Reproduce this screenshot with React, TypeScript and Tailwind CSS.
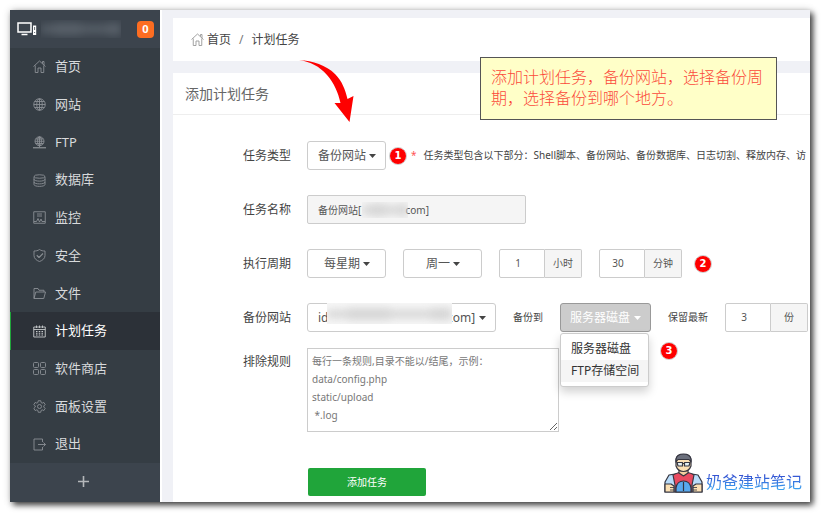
import React, { useState } from "react";

type IconName =
  | "home"
  | "site"
  | "ftp"
  | "database"
  | "monitor"
  | "shield"
  | "folder"
  | "calendar"
  | "apps"
  | "gear"
  | "exit";

const NAV_ITEMS: { icon: IconName; label: string }[] = [
  { icon: "home", label: "首页" },
  { icon: "site", label: "网站" },
  { icon: "ftp", label: "FTP" },
  { icon: "database", label: "数据库" },
  { icon: "monitor", label: "监控" },
  { icon: "shield", label: "安全" },
  { icon: "folder", label: "文件" },
  { icon: "calendar", label: "计划任务" },
  { icon: "apps", label: "软件商店" },
  { icon: "gear", label: "面板设置" },
  { icon: "exit", label: "退出" },
];

const EXCLUDE_HINT =
  "每行一条规则,目录不能以/结尾，示例：\ndata/config.php\nstatic/upload\n *.log";

// The domain is masked, so the gap is padded with non-breaking spaces
const MASKED_NAME = "备份网站[" + "\u00a0".repeat(17) + "com]";
const MASKED_SITE = "id" + "\u00a0".repeat(38) + "com]";

const ICONS: Record<IconName, React.ReactNode> = {
  home: (
    <path d="M1 13 13 2l12 11M4.500 11v14H10v-9h6v9h5.500V11M19 7V3h3v7" />
  ),
  site: (
    <>
      <circle cx="13" cy="13" r="11.500" />
      <ellipse cx="13" cy="13" rx="5.500" ry="11.500" />
      <path d="M13 1.500v23M1.500 13h23M3.500 7h19M3.500 19h19" />
    </>
  ),
  ftp: (
    <>
      <circle cx="13" cy="10.500" r="9" />
      <ellipse cx="13" cy="10.500" rx="4" ry="9" />
      <path d="M13 1.500v21M4 10.500h18M5.500 6h15M5.500 15h15" />
      <path d="M0 23.500h26" strokeWidth="2.500" />
    </>
  ),
  database: (
    <>
      <ellipse cx="13" cy="5" rx="11" ry="3.500" />
      <path d="M2 5v16c0 5 22 5 22 0V5M2 10.500c0 5 22 5 22 0M2 16c0 5 22 5 22 0" />
    </>
  ),
  monitor: (
    <>
      <path d="M1.500 1.500h23v23h-23z" />
      <path d="M8 6h10M8 10h10M2 21h5l3-6 3 7 3-6 2 5h6" />
    </>
  ),
  shield: (
    <>
      <path d="M13 1c3.500 2.500 7 3 11 3v9c0 6-5 10-11 12C7 23 2 19 2 13V4c4 0 7.500-.5 11-3z" />
      <path d="m7.500 12.500 4.500 4.500 8-8" strokeWidth="2.200" />
    </>
  ),
  folder: (
    <path d="M2 23V3h8l2 3.500h10V10M2 23l3.500-13H25l-3.500 13H2z" />
  ),
  calendar: (
    <>
      <path d="M1.500 4h23v20h-23zM1.500 9h23M7 1v5M13 1v5M19 1v5" />
      <path d="M6 13h3M11.500 13h3M17 13h3M6 16.500h3M11.500 16.500h3M17 16.500h3M6 20h3M11.500 20h3M17 20h3" strokeWidth="2.200" />
    </>
  ),
  apps: (
    <>
      <rect x="1" y="1" width="10" height="10" rx="2" />
      <rect x="15" y="1" width="10" height="10" rx="2" />
      <rect x="1" y="15" width="10" height="10" rx="2" />
      <rect x="15" y="15" width="10" height="10" rx="2" />
    </>
  ),
  gear: (
    <>
      <path d="m10.500 1.500-.8 3.700-2 1.100-3.400-1.400-2.600 4.300L4.500 12v2l-2.800 2.800 2.600 4.300 3.400-1.400 2 1.100.8 3.700h5l.8-3.700 2-1.100 3.400 1.400 2.600-4.300-2.800-2.800v-2l2.800-2.800-2.600-4.300-3.400 1.400-2-1.100-.8-3.700z" />
      <circle cx="13" cy="13" r="4" />
    </>
  ),
  exit: <path d="M19 8V2H2v22h17v-6M10 13h15M21 9l4 4-4 4" />,
};

const Icon = ({ name, className }: { name: IconName; className?: string }) => (
  <svg
    viewBox="0 0 26 26"
    fill="none"
    stroke="currentColor"
    strokeWidth="1.800"
    strokeLinejoin="round"
    aria-hidden="true"
    className={`size-[13px] shrink-0 ${className ?? ""}`}
  >
    {ICONS[name]}
  </svg>
);

const Caret = ({ className }: { className?: string }) => (
  <svg
    viewBox="0 0 7 4"
    fill="currentColor"
    aria-hidden="true"
    className={`h-1 w-[7px] shrink-0 ${className ?? ""}`}
  >
    <path d="M0 0h7L3.500 4z" />
  </svg>
);

// Blurred patch that hides the server address and domains
const Smudge = ({ className }: { className: string }) => (
  <span className={`pointer-events-none overflow-hidden ${className}`}>
    <span className="flex h-full items-center blur-[4px]">
      <span className="h-2 flex-1 bg-current" />
      <span className="h-3 flex-2 bg-current" />
      <span className="h-2 flex-2 bg-current" />
      <span className="h-3 flex-1 bg-current" />
    </span>
  </span>
);

const Step = ({ n, className }: { n: number; className: string }) => (
  <span
    className={`flex size-[18px] items-center justify-center rounded-full border border-[#ccc] bg-white ${className}`}
  >
    <span className="flex size-4 items-center justify-center rounded-full bg-[#fe0000] font-['DejaVu_Sans',sans-serif] text-[10px] leading-none font-bold text-white">
      {n}
    </span>
  </span>
);

interface DropProps {
  label: string;
  options: string[];
  className: string;
  selectClass?: string;
  caretClass?: string;
  children?: React.ReactNode;
}

const Drop = ({
  label,
  options,
  className,
  selectClass = "pl-[10px]",
  caretClass = "right-[10px]",
  children,
}: DropProps) => (
  <span className={`relative h-[29px] shrink-0 ${className}`}>
    <select
      aria-label={label}
      className={`h-full w-full appearance-none rounded-[3px] border border-[#ccc] bg-white pr-4 text-xs text-[#555] ${selectClass}`}
    >
      {options.map((o) => (
        <option key={o}>{o}</option>
      ))}
    </select>
    {children}
    <Caret className={`pointer-events-none absolute top-[13px] text-[#444] ${caretClass}`} />
  </span>
);

const UnitInput = ({ label, value, unit }: { label: string; value: string; unit: string }) => (
  <label className="flex h-[29px] shrink-0 text-[10px] text-[#555]">
    <input
      aria-label={label}
      defaultValue={value}
      className="w-[46px] rounded-l-[2px] border border-[#ccc] bg-white pr-2 text-center"
    />
    <span className="flex w-[37px] items-center justify-center rounded-r-[2px] border border-l-0 border-[#ccc] bg-[#f5f5f5]">
      {unit}
    </span>
  </label>
);

const Row = ({ label, children }: { label: string; children: React.ReactNode }) => (
  <div className="flex h-[29px] items-center gap-4">
    <span className="w-[118px] shrink-0 text-right text-xs text-[#444]">{label}</span>
    <div className="flex items-center whitespace-nowrap">{children}</div>
  </div>
);

const Sidebar = () => (
  <aside className="flex w-[150px] shrink-0 flex-col bg-[#353d44]">
    <div className="flex h-[38px] items-center bg-[#3c444d] pr-[6px] pl-[7px]">
      <svg viewBox="0 0 20 14" className="h-[14px] w-5" aria-hidden="true">
        <path d="M1 1h13v9H1z" fill="none" stroke="#fff" strokeWidth="1.500" />
        <path d="M4.500 12.500h6" stroke="#fff" strokeWidth="1.500" />
        <path d="M16 3.500h3.200V13H16z" fill="#fff" />
        <path d="M17.600 5v3M17.600 10v1" stroke="#3c444d" strokeWidth=".8" />
      </svg>
      <Smudge className="ml-1 h-[18px] w-20 text-[#59616a]" />
      <span className="ml-auto flex h-[17px] w-[17px] items-center justify-center rounded-[4px] bg-[#fd6d21] text-[11px] font-bold text-white">
        0
      </span>
    </div>
    <nav className="flex-1">
      <ul className="flex h-full flex-col">
        {NAV_ITEMS.map(({ icon, label }) => (
          <li key={label} className="flex flex-1">
            <a
              href="#"
              className={
                icon === "calendar"
                  ? "flex flex-1 items-center gap-[9px] border-l border-[#20a53a] bg-[#2c3138] pl-[22px] text-[13px] text-white"
                  : "flex flex-1 items-center gap-[9px] pl-[23px] text-[13px] text-[#d8dadc]"
              }
            >
              <Icon
                name={icon}
                className={icon === "calendar" ? "text-[#c6c9cc]" : "text-[#8b9095]"}
              />
              {label}
            </a>
          </li>
        ))}
      </ul>
    </nav>
    <button aria-label="添加菜单" className="flex h-[39px] items-center justify-center bg-[#3c444d] pr-1 pb-[2px]">
      <svg viewBox="0 0 11 11" className="size-[11px]" aria-hidden="true">
        <path d="M5.500 0v11M0 5.500h11" stroke="#b4b7ba" strokeWidth="1.600" />
      </svg>
    </button>
  </aside>
);

const BackupTarget = () => {
  const [open, setOpen] = useState(true);
  const [target, setTarget] = useState("服务器磁盘");

  const pick = (value: string) => {
    setTarget(value);
    setOpen(false);
  };

  return (
    <div className="relative ml-[17px]">
      <button
        aria-haspopup="menu"
        aria-expanded={open}
        onClick={() => setOpen(!open)}
        className="flex h-[29px] w-[91px] items-center justify-center gap-1 rounded-[3px] border border-[#999] bg-[#ccc] text-xs text-white"
      >
        {target}
        <Caret />
      </button>
      {open && (
        <div
          role="menu"
          className="absolute top-[30px] left-0 z-10 w-[89px] rounded-[3px] border border-[#ccc] bg-white py-1 shadow-[0_5px_10px_rgba(0,0,0,0.18)]"
        >
          <button
            role="menuitem"
            onClick={() => pick("服务器磁盘")}
            className="block h-[22px] w-full pl-[10px] text-left text-xs text-[#333]"
          >
            服务器磁盘
          </button>
          <button
            role="menuitem"
            onClick={() => pick("FTP存储空间")}
            className="block h-[22px] w-full bg-[#f5f5f5] pl-[10px] text-left text-xs text-[#333]"
          >
            FTP存储空间
          </button>
        </div>
      )}
      <Step n={3} className="absolute top-[39px] left-[100px]" />
    </div>
  );
};

const Watermark = () => (
  <div className="absolute right-2 bottom-[9px] flex items-end gap-[3px]">
    <svg viewBox="0 0 39 40" className="h-10 w-[39px]" aria-hidden="true">
      <g stroke="#353540" strokeWidth="1.200" strokeLinejoin="round">
        <path d="M1 29 5 22l9-1.500h11l9 1.500 4 7v10H1z" fill="#b9dcfa" />
        <path d="M9 22q4-2 6-2.500l4.500 2.500 4.500-2.500q3 .5 6 2.500l-2 10v7H11v-7z" fill="#e84a60" />
        <path d="M15 15h9v5l-4.500 3L15 20z" fill="#f3cf9f" />
        <path d="M12 7q0-5.500 7.500-5.500T27 7v6q-2 5.500-7.500 5.500T12 13z" fill="#fbe0b4" />
        <path d="M12 9V6q1-5 7.500-5T27 6v3l-2-2.500H14z" fill="#6b6f7c" />
        <path d="M13 9.500h5.500V13H14zM20.500 9.500H26L25 13h-4.500zM18 10.500h3" fill="#e4f1f5" />
        <path d="M12 39v-4q1-7 7.500-7t7.500 7v4z" fill="#58a9ee" />
        <path d="M19.500 29v9" fill="none" />
        <path d="M1 31h6l3 2v6H1zM38 31h-6l-3 2v6h9z" fill="#fbe0b4" />
        <path d="M6 34.500h4M6 37h4M29 34.500h4M29 37h4" fill="none" strokeWidth=".8" />
      </g>
    </svg>
    <span className="bg-linear-to-b from-[#3535c8] to-[#3db4f6] bg-clip-text text-base leading-[22px] text-transparent">
      奶爸建站笔记
    </span>
  </div>
);

const App = () => {
  return (
    <div className="flex min-h-screen bg-white pt-[10px] pr-[11px] pb-[11px] pl-[10px] font-['Noto_Sans','Noto_Sans_CJK_SC',sans-serif]">
      <div className="relative flex min-w-0 flex-1 shadow-[3px_3px_6px_rgba(0,0,0,0.75),0_0_8px_rgba(0,0,0,0.15)]">
        <Sidebar />

        <main className="flex min-w-0 flex-1 flex-col gap-3 overflow-hidden border-l-2 border-white bg-[#f0f1f6] pt-2 pl-[11px]">
          {/* Breadcrumb */}
          <div className="flex h-[43px] shrink-0 items-center bg-white pl-[18px] text-xs text-[#444]">
            <Icon name="home" className="mr-[3px] text-[#999]" />
            <a href="#">首页</a>
            <span className="mx-2 text-[#777]">/</span>
            <span>计划任务</span>
          </div>

          <section className="flex-1 bg-white">
            <h1 className="flex h-[42px] items-center border-b border-[#eee] pl-3 text-[14px] text-[#666]">
              添加计划任务
            </h1>

            <form className="pt-[26px] pb-[6px]" onSubmit={(e) => e.preventDefault()}>
              <div className="flex flex-col gap-[25px]">
                <Row label="任务类型">
                  <Drop label="任务类型" options={["备份网站"]} className="w-[79px]" />
                  <Step n={1} className="ml-[3px]" />
                  <span className="ml-1 text-[10px] text-[#f55]">*</span>
                  <span className="ml-[7px] text-[10px] text-[#444]">
                    任务类型包含以下部分：Shell脚本、备份网站、备份数据库、日志切割、释放内存、访
                  </span>
                </Row>

                <Row label="任务名称">
                  <span className="relative h-[29px] w-[219px]">
                    <input
                      aria-label="任务名称"
                      readOnly
                      value={MASKED_NAME}
                      className="h-full w-full rounded-[2px] border border-[#ccc] bg-[#f5f5f5] pl-[10px] text-[10px] text-[#555]"
                    />
                    <Smudge className="absolute top-[7px] left-[55px] h-4 w-[46px] text-[#d4d4d4]" />
                  </span>
                </Row>

                <Row label="执行周期">
                  <div className="flex items-center gap-[17px]">
                    <Drop
                      label="执行周期"
                      options={["每星期"]}
                      className="w-[79px]"
                      selectClass="pl-4"
                      caretClass="right-4"
                    />
                    <Drop
                      label="星期"
                      options={["周一"]}
                      className="w-[79px]"
                      selectClass="pl-[22px]"
                      caretClass="right-[22px]"
                    />
                    <UnitInput label="小时" value="1" unit="小时" />
                    <UnitInput label="分钟" value="30" unit="分钟" />
                  </div>
                  <Step n={2} className="ml-3" />
                </Row>

                <Row label="备份网站">
                  <Drop label="备份网站" options={[MASKED_SITE]} className="w-[189px]">
                    <Smudge className="absolute top-0 left-5 h-[21px] w-[125px] bg-[#f7f7f7] text-[#d4d4d4]" />
                  </Drop>
                  <span className="ml-[17px] text-[10px] text-[#444]">备份到</span>
                  <BackupTarget />
                  <span className="mr-[17px] ml-[17px] text-[10px] text-[#444]">保留最新</span>
                  <UnitInput label="保留最新" value="3" unit="份" />
                </Row>
              </div>

              <div className="mt-4 flex items-start gap-4">
                <label htmlFor="exclude" className="w-[118px] shrink-0 pt-1.5 text-right text-xs text-[#444]">
                  排除规则
                </label>
                <textarea
                  id="exclude"
                  placeholder={EXCLUDE_HINT}
                  className="block h-[84px] w-[252px] border border-[#ccc] bg-white px-1 pt-[3px] text-[10px] leading-[18px] text-[#444] placeholder:text-[#777]"
                />
              </div>

              <button
                type="submit"
                className="mt-9 ml-[135px] block h-7 w-[118px] rounded-[2px] bg-[#20a53a] text-[10px] text-white"
              >
                添加任务
              </button>
            </form>
          </section>
        </main>

        {/* Annotations laid over the panel */}
        <svg
          viewBox="0 0 56 66"
          className="pointer-events-none absolute top-[49px] left-[288px] h-[66px] w-14"
          aria-hidden="true"
        >
          <path
            d="M1 1C15 2 28 6 37 15c7 7 10 15 12.500 25l6-3-4 26-15-19 6 0C40 33 36 24 29 16 21 7 13 3 1 1z"
            fill="#fe0000"
          />
        </svg>
        <p className="absolute top-[47px] right-[33px] w-[297px] border border-[#555] bg-[#ffffc8] px-[10px] pt-[9px] pb-[10px] text-base leading-[21px] font-light text-[#fb4a3a]">
          添加计划任务，备份网站，选择备份周期，选择备份到哪个地方。
        </p>
        <Watermark />
      </div>
    </div>
  );
};

export default App;
